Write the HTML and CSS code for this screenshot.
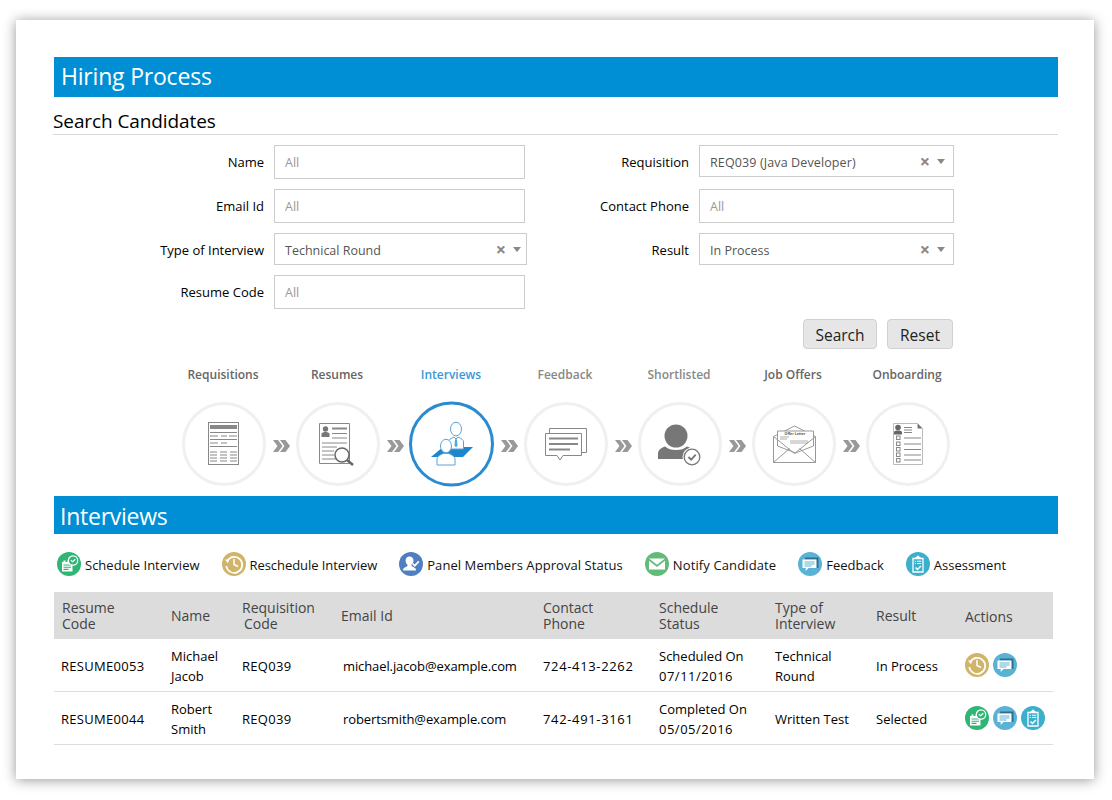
FILE: index.html
```html
<!DOCTYPE html>
<html lang="en">
<head>
<meta charset="utf-8">
<title>Hiring Process</title>
<link rel="stylesheet" href="styles.css">
</head>
<body>
<svg class="defs" width="0" height="0" aria-hidden="true">
  <symbol id="i-schedule" viewBox="0 0 24 24">
    <circle cx="12" cy="12" r="12" fill="#2fb574"/>
    <path d="M5 10h10.500v9.500H5z" fill="#fff"/>
    <path d="M6.500 8.500h2v2h-2zM10.500 8.500h2v2h-2z" fill="#fff"/>
    <path d="M6.500 13h7.500M6.500 15.200h7.500M6.500 17.400h5" stroke="#2fb574" stroke-width="1.100"/>
    <circle cx="16" cy="8.500" r="4.700" fill="#2fb574" stroke="#fff" stroke-width="1.300"/>
    <path d="M13.800 8.200l1.800 1.500 2.700-2.400" fill="none" stroke="#fff" stroke-width="1.200"/>
  </symbol>
  <symbol id="i-reschedule" viewBox="0 0 24 24">
    <circle cx="12" cy="12" r="12" fill="#cfb469"/>
    <path d="M5.500 8.500A8 8 0 1 1 4.300 14" fill="none" stroke="#fff" stroke-width="1.700"/>
    <path d="M2.800 7.500l4.500.2-1.300 3.600z" fill="#fff"/>
    <path d="M12 7v5.500l4 2" fill="none" stroke="#fff" stroke-width="1.500"/>
  </symbol>
  <symbol id="i-panel" viewBox="0 0 24 24">
    <circle cx="12" cy="12" r="12" fill="#4f7fc1"/>
    <path d="M10.500 4.500c2.500 0 4 1.800 4 4.200 0 2-1 3.300-1.800 4.100-.3.800 0 1.400.8 1.800l1.800.9c1 .5 1.700 1.400 1.700 3H4c0-1.600.7-2.500 1.700-3l2-1c.8-.4 1.100-1 .8-1.700C7.700 12 6.600 10.700 6.600 8.700c0-2.400 1.400-4.200 3.900-4.200z" fill="#fff"/>
    <path d="M13.500 11.500l2.300 2.200 4-4.300" fill="none" stroke="#4f7fc1" stroke-width="3.400"/>
    <path d="M13.500 11.500l2.300 2.200 4-4.300" fill="none" stroke="#fff" stroke-width="1.700"/>
  </symbol>
  <symbol id="i-notify" viewBox="0 0 24 24">
    <circle cx="12" cy="12" r="12" fill="#62bb78"/>
    <path d="M4 6.500h16l-8 6.300z" fill="#fff"/>
    <path d="M4 8.800l8 6.200 8-6.200v8.700H4z" fill="#fff"/>
  </symbol>
  <symbol id="i-feedback" viewBox="0 0 24 24">
    <circle cx="12" cy="12" r="12" fill="#5ab3d4"/>
    <path d="M7 5.500h13.500v10.500h-2.500V7.500H7z" fill="#2f6f8f"/>
    <path d="M4.500 7.500h14v8.500h-8l-2.800 3v-3H4.500z" fill="#fff"/>
    <path d="M6.500 10h10M6.500 12h10M6.500 14h7" stroke="#5ab3d4" stroke-width="1"/>
  </symbol>
  <symbol id="i-assessment" viewBox="0 0 24 24">
    <circle cx="12" cy="12" r="12" fill="#3cafcb"/>
    <path d="M7 6.500h10v13.500H7z" fill="none" stroke="#fff" stroke-width="1.300"/>
    <path d="M9.500 6.800h5V5h-1.300V3.700h-2.400V5H9.500z" fill="#fff"/>
    <path d="M8.800 9.300h1M11 9.300h4.300M8.800 11.500h1M11 11.500h4.300" stroke="#fff" stroke-width="1.100"/>
    <path d="M9.500 15.500l2 2 3.400-3.500" fill="none" stroke="#fff" stroke-width="1.500"/>
  </symbol>
  <symbol id="i-arrows" viewBox="0 0 17 12">
    <path d="M0 0h5l4.500 6L5 12H0l4.500-6z" fill="#999"/>
    <path d="M7 0h5.500L17 6l-4.500 6H7l4.500-6z" fill="#999"/>
  </symbol>
</svg>

<main class="card">
  <h1 class="bar bar-main">Hiring Process</h1>

  <section class="search">
    <h2 class="search-title">Search Candidates</h2>
    <form class="filters">
      <label class="lbl">Name</label>
      <input class="inp" placeholder="All">
      <label class="lbl">Requisition</label>
      <div class="sel sel-right"><span class="wide">REQ039 (Java Developer)</span><i class="clear">×</i><i class="caret"></i></div>

      <label class="lbl">Email Id</label>
      <input class="inp" placeholder="All">
      <label class="lbl">Contact Phone</label>
      <input class="inp inp-right" placeholder="All">

      <label class="lbl">Type of Interview</label>
      <div class="sel"><span>Technical Round</span><i class="clear">×</i><i class="caret"></i></div>
      <label class="lbl">Result</label>
      <div class="sel sel-right"><span>In Process</span><i class="clear">×</i><i class="caret"></i></div>

      <label class="lbl">Resume Code</label>
      <input class="inp" placeholder="All">
    </form>
    <div class="buttons">
      <button class="btn btn-search" type="button">Search</button>
      <button class="btn btn-reset" type="button">Reset</button>
    </div>
  </section>

  <nav class="steps">
    <div class="step">
      <div class="step-label">Requisitions</div>
      <svg class="step-ic" viewBox="0 0 84 84">
        <circle class="ring" cx="42" cy="42" r="40.500"/>
        <rect x="26.500" y="20.500" width="30" height="42" fill="#fff" stroke="#888"/>
        <rect x="28" y="23" width="27" height="4" fill="#888"/>
        <path d="M28 30.500h27M28 34h8M39 34h6M47 34h8M28 37.500h27M28 41h8M39 41h6M28 44.500h27" stroke="#888" stroke-width="1.100"/>
        <path d="M28 50h7M38 50h7M48 50h7M28 53h7M38 53h7M48 53h7M28 56h7M38 56h7M48 56h7M28 59h7M38 59h7M48 59h7" stroke="#888" stroke-width="1.100"/>
      </svg>
    </div>
    <svg class="arrow"><use href="#i-arrows"/></svg>
    <div class="step">
      <div class="step-label">Resumes</div>
      <svg class="step-ic" viewBox="0 0 84 84">
        <circle class="ring" cx="42" cy="42" r="40.500"/>
        <path d="M23.500 21.500h30v40h-30z" fill="#fff" stroke="#888"/>
        <circle cx="29.500" cy="27" r="2.700" fill="#777"/>
        <path d="M25.500 35v-3.500c1-1 2-1.500 4-1.500s3 .5 4 1.500V35z" fill="#777"/>
        <path d="M36 26.500h15" stroke="#888" stroke-width="2"/>
        <path d="M36 31.500h15M36 36h15M26 41h25M26 45h15M26 49h12M26 53h12M26 57h14" stroke="#888" stroke-width="1"/>
        <circle cx="46" cy="53" r="7" fill="#fff" fill-opacity=".7" stroke="#666" stroke-width="1.500"/>
        <path d="M51 58l6 5" stroke="#666" stroke-width="2.500"/>
      </svg>
    </div>
    <svg class="arrow"><use href="#i-arrows"/></svg>
    <div class="step">
      <div class="step-label active">Interviews</div>
      <svg class="step-ic" viewBox="0 0 84 84">
        <circle class="ring ring-active" cx="41.500" cy="42" r="41"/>
        <path d="M21 55l12-10h30l-10 10z" fill="#1f86cc"/>
        <path d="M38.500 47v-7c0-2.500 2.500-3.500 5.500-5l2 2 2-2c3 1.500 5.500 2.500 5.500 5v7z" fill="#fff" stroke="#5aa5d8"/>
        <path d="M45 37.500l1-.5 1 .5 .5 6-1.500 2-1.500-2z" fill="#5aa5d8"/>
        <ellipse cx="46" cy="27" rx="5.500" ry="6.800" fill="#fff" stroke="#5aa5d8"/>
        <path d="M27 63v-6c0-2.500 2.500-3.500 6-5.500h6c3.500 2 6 3 6 5.500v6z" fill="#fff" stroke="#5aa5d8"/>
        <ellipse cx="36" cy="44" rx="5.500" ry="6.700" fill="#fff" stroke="#5aa5d8"/>
      </svg>
    </div>
    <svg class="arrow"><use href="#i-arrows"/></svg>
    <div class="step">
      <div class="step-label muted">Feedback</div>
      <svg class="step-ic" viewBox="0 0 84 84">
        <circle class="ring" cx="42" cy="42" r="40.500"/>
        <path d="M25.500 26.500h37v24h-37z" fill="#fff" stroke="#888"/>
        <path d="M21.500 31.500h36v22H39l-3 4.500-3-4.500H21.500z" fill="#fff" stroke="#888"/>
        <path d="M25 36.500h29M25 42h29M25 47.500h21" stroke="#888" stroke-width="2"/>
      </svg>
    </div>
    <svg class="arrow"><use href="#i-arrows"/></svg>
    <div class="step">
      <div class="step-label muted">Shortlisted</div>
      <svg class="step-ic" viewBox="0 0 84 84">
        <circle class="ring" cx="42" cy="42" r="40.500"/>
        <circle cx="38" cy="34" r="11.500" fill="#777"/>
        <path d="M20 57v-5c0-4 3-6 7-7.500 3 2.500 6 3.500 11 3.500s8-1 11-3.500c4 1.500 7 3.500 7 7.500v5z" fill="#777"/>
        <circle cx="54" cy="55" r="9.500" fill="#fff"/>
        <circle cx="54" cy="55" r="7.800" fill="#fff" stroke="#777" stroke-width="1.300"/>
        <path d="M50.500 55l2.700 2.700 4.500-5" fill="none" stroke="#777" stroke-width="1.800"/>
      </svg>
    </div>
    <svg class="arrow"><use href="#i-arrows"/></svg>
    <div class="step">
      <div class="step-label">Job Offers</div>
      <svg class="step-ic" viewBox="0 0 84 84">
        <circle class="ring" cx="42" cy="42" r="40.500"/>
        <path d="M21.500 34.500L42.500 24l21 10.500v26h-42z" fill="#fff" stroke="#999"/>
        <path d="M25.500 29h36v15l-18 7-18-7z" fill="#fff" stroke="#999"/>
        <text class="tiny" x="43" y="32.500" text-anchor="middle">Offer Letter</text>
        <path d="M28 35h9M28 37h7M38 39h18M38 41h18" stroke="#999" stroke-width=".8"/>
        <path d="M21.500 34.500l21 17 21-17M21.500 60.500l16-14M63.500 60.500l-16-14" fill="none" stroke="#999"/>
      </svg>
    </div>
    <svg class="arrow"><use href="#i-arrows"/></svg>
    <div class="step">
      <div class="step-label">Onboarding</div>
      <svg class="step-ic" viewBox="0 0 84 84">
        <circle class="ring" cx="42" cy="42" r="40.500"/>
        <path d="M27.500 21.500h24l5 5v36h-29z" fill="#fff" stroke="#bbb"/>
        <path d="M51.500 21.500l5 5h-5z" fill="#777"/>
        <circle cx="32" cy="25.500" r="2.800" fill="#666"/>
        <path d="M28 32.500v-2c0-1.500 1.500-2 4-2s4 .5 4 2v2z" fill="#666"/>
        <path d="M38 25.500h8M38 28h8M38 30.500h8" stroke="#888"/>
        <g fill="none" stroke="#888">
          <rect x="30.500" y="34" width="3.500" height="3.500"/><rect x="30.500" y="40" width="3.500" height="3.500"/><rect x="30.500" y="45.500" width="3.500" height="3.500"/><rect x="30.500" y="51" width="3.500" height="3.500"/><rect x="30.500" y="56.500" width="3.500" height="3.500"/>
        </g>
        <path d="M38 36h17M38 42h17M38 47.500h17M38 53h17M38 58h17" stroke="#888" stroke-width="1.200"/>
      </svg>
    </div>
  </nav>

  <h2 class="bar bar-sub">Interviews</h2>

  <ul class="legend">
    <li><svg class="ic"><use href="#i-schedule"/></svg>Schedule Interview</li>
    <li class="lg-tight"><svg class="ic"><use href="#i-reschedule"/></svg>Reschedule Interview</li>
    <li class="lg-wide"><svg class="ic"><use href="#i-panel"/></svg>Panel Members Approval Status</li>
    <li class="lg-wide2"><svg class="ic"><use href="#i-notify"/></svg>Notify Candidate</li>
    <li><svg class="ic"><use href="#i-feedback"/></svg>Feedback</li>
    <li><svg class="ic"><use href="#i-assessment"/></svg>Assessment</li>
  </ul>

  <table class="grid">
    <colgroup>
      <col class="c1"><col class="c2"><col class="c3"><col class="c4"><col class="c5"><col class="c6"><col class="c7"><col class="c8"><col class="c9">
    </colgroup>
    <thead>
      <tr>
        <th>Resume<br>Code</th>
        <th>Name</th>
        <th>Requisition<br><span class="nudge">Code</span></th>
        <th>Email Id</th>
        <th>Contact<br>Phone</th>
        <th>Schedule<br>Status</th>
        <th>Type of<br>Interview</th>
        <th>Result</th>
        <th class="th-actions">Actions</th>
      </tr>
    </thead>
    <tbody>
      <tr>
        <td class="code">RESUME0053</td>
        <td>Michael<br>Jacob</td>
        <td class="req">REQ039</td>
        <td class="email">michael.jacob@example.com</td>
        <td class="phone">724-413-2262</td>
        <td>Scheduled On<br><span class="date">07/11/2016</span></td>
        <td>Technical<br>Round</td>
        <td>In Process</td>
        <td class="cell-acts"><div class="acts"><svg class="ic"><use href="#i-reschedule"/></svg><svg class="ic"><use href="#i-feedback"/></svg></div></td>
      </tr>
      <tr>
        <td class="code">RESUME0044</td>
        <td>Robert<br>Smith</td>
        <td class="req">REQ039</td>
        <td class="email">robertsmith@example.com</td>
        <td class="phone">742-491-3161</td>
        <td>Completed On<br><span class="date">05/05/2016</span></td>
        <td>Written Test</td>
        <td>Selected</td>
        <td class="cell-acts"><div class="acts"><svg class="ic"><use href="#i-schedule"/></svg><svg class="ic"><use href="#i-feedback"/></svg><svg class="ic"><use href="#i-assessment"/></svg></div></td>
      </tr>
    </tbody>
  </table>
</main>
</body>
</html>
```
FILE: styles.css
```css
* { box-sizing: border-box; }
html, body { margin: 0; padding: 0; background: #fff; }
body { font-family: "Open Sans", "Noto Sans", sans-serif; font-size: 13px; color: #000; overflow: hidden; height: 800px; }
.defs { display: block; height: 0; }

.card {
  width: 1078px;
  height: 759px;
  margin: 20px 0 0 16px;
  padding: 37px 36px 0 38px;
  background: #fff;
  box-shadow: 0 1px 12px rgba(0, 0, 0, .42);
}

.bar { margin: 0; background: #008fd5; color: #fff; font-weight: 400; display: flex; align-items: center; }
.bar-main { height: 40px; padding: 0 0 2px 7px; font-size: 23px; letter-spacing: -.2px; }
.bar-sub { height: 38px; margin-top: 10px; padding: 1px 0 0 6px; font-size: 23px; letter-spacing: -.25px; }

.search-title {
  margin: 0 0 10px -1px;
  height: 38px;
  padding-top: 11px;
  font-size: 19px;
  line-height: 26px;
  letter-spacing: -.1px;
  font-weight: 400;
  border-bottom: 1px solid #d8d8d8;
}

.filters {
  display: grid;
  grid-template-columns: 220px 253px 172px 255px;
  grid-template-rows: 44px 44px 42px 34px;
  align-items: start;
}
.lbl { padding-right: 10px; text-align: right; line-height: 34px; font-size: 13px; }
.inp {
  display: block;
  width: 251px;
  height: 34px;
  padding: 0 10px;
  border: 1px solid #ccc;
  font: inherit;
  font-size: 12.500px;
  outline: 0;
  color: #555;
}
.inp::placeholder { color: #999; opacity: 1; }
.inp-right { width: 255px; }

.sel {
  display: flex;
  align-items: center;
  width: 253px;
  height: 32px;
  padding: 0 5px 0 10px;
  border: 1px solid #ccc;
  font-size: 12.500px;
  color: #555;
}
.sel-right { width: 255px; padding-right: 8px; }
.sel span { flex: 1; padding-top: 2px; }
.sel .wide { letter-spacing: .12px; }
.clear { font-style: normal; font-weight: 700; font-size: 18px; line-height: 16px; color: #888; margin: 0 7px 0 0; }
.caret { width: 0; height: 0; border-left: 4.500px solid transparent; border-right: 4.500px solid transparent; border-top: 5px solid #888; }

.buttons { display: flex; justify-content: flex-end; gap: 10px; margin: 10px 105px 0 0; }
.btn {
  height: 30px;
  padding: 1px 0 0;
  border: 1px solid #d0d0d0;
  border-radius: 4px;
  background: #e6e6e6;
  font: inherit;
  font-size: 15.500px;
  color: #222;
}
.btn-search { width: 74px; }
.btn-reset { width: 66px; }

.steps { display: flex; margin: 16px 0 0 128px; }
.step { width: 84px; }
.step-label {
  margin: 0 -15px 19px -17px;
  height: 18px;
  padding-top: 1px;
  line-height: 18px;
  text-align: center;
  font-size: 12px;
  font-weight: 600;
  color: #666;
}
.step-label.active { color: #3a98d4; }
.step-label.muted { color: #888; }
.step-ic { display: block; width: 84px; height: 84px; overflow: visible; }
.ring { fill: #fff; stroke: #f0f0f0; stroke-width: 3; }
.ring-active { stroke: #2a8ccf; }
.tiny { font-size: 3.500px; font-weight: 700; fill: #555; }
.arrow { width: 17px; height: 12px; margin: 75px 6px 0 7px; flex: none; }

.legend { display: flex; gap: 22px; margin: 18px 0 14px; padding: 0 0 0 3px; list-style: none; }
.legend li { display: flex; align-items: flex-start; gap: 4px; font-size: 13px; line-height: 26px; color: #111; }
.legend .lg-tight { letter-spacing: -.06px; }
.legend .lg-wide { letter-spacing: .07px; }
.legend .lg-wide2 { letter-spacing: .12px; }
.ic { display: block; width: 24px; height: 24px; flex: none; }

.grid { width: 999px; border-collapse: separate; border-spacing: 0; table-layout: fixed; }
.c1 { width: 109px; } .c2 { width: 71px; } .c3 { width: 99px; } .c4 { width: 202px; } .c5 { width: 116px; }
.c6 { width: 116px; } .c7 { width: 101px; } .c8 { width: 89px; } .c9 { width: 96px; }
.grid th {
  height: 47px;
  padding: 0 0 0 8px;
  background: #dcdcdc;
  color: #444;
  font-size: 14px;
  font-weight: 400;
  line-height: 16px;
  text-align: left;
}
.grid th.th-actions { padding-top: 2px; }
.grid td {
  height: 53px;
  padding: 2px 0 0 8px;
  border-bottom: 1px solid #ddd;
  font-size: 13px;
  line-height: 20px;
}
.grid td.code { padding-left: 7px; letter-spacing: .3px; }
.grid td.req { letter-spacing: .3px; }
.grid td.email { padding-left: 10px; letter-spacing: -.1px; }
.grid td.phone { letter-spacing: .65px; }
.grid td.cell-acts { padding-top: 0; }
.date { letter-spacing: .5px; }
.nudge { margin-left: 2px; }
.acts { display: flex; gap: 4px; }
```
